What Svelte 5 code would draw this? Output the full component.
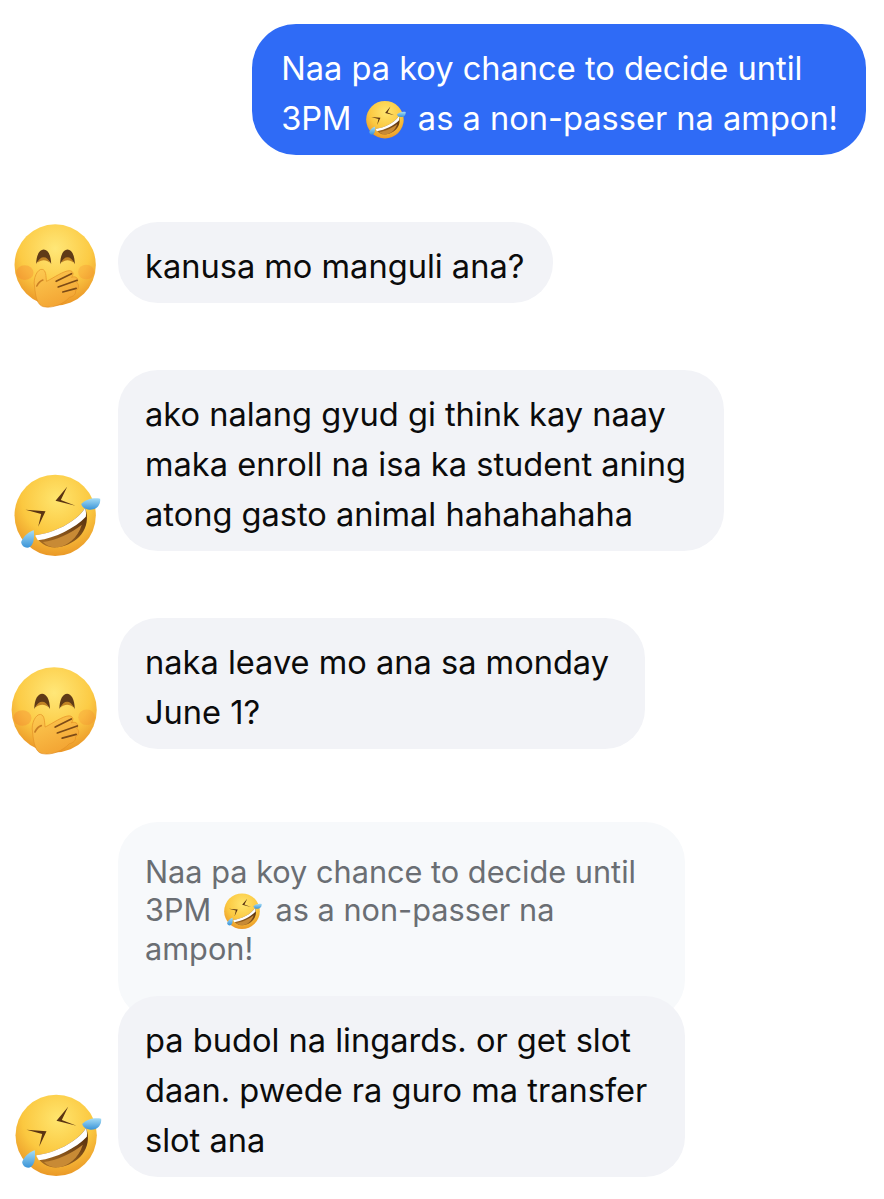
<script>
  const replyLines = ['pa budol na lingards. or get slot', 'daan. pwede ra guro ma transfer', 'slot ana'];
</script>

{#snippet hand(cls)}
  <svg class="emoji {cls}" viewBox="42 42 245 255" aria-hidden="true">
    <defs>
      <radialGradient id="faceA" cx="50%" cy="30%" r="72%">
        <stop offset="0" stop-color="#ffe778" />
        <stop offset="0.6" stop-color="#fccb45" />
        <stop offset="1" stop-color="#ea9325" />
      </radialGradient>
      <linearGradient id="handA" x1="0" y1="0" x2="0.5" y2="1">
        <stop offset="0" stop-color="#fdcb52" />
        <stop offset="1" stop-color="#f3a433" />
      </linearGradient>
    </defs>
    <circle cx="165" cy="165" r="122" fill="url(#faceA)" />
    <ellipse cx="74" cy="188" rx="26" ry="22" fill="#f1782f" opacity="0.3" />
    <ellipse cx="258" cy="186" rx="24" ry="22" fill="#f1782f" opacity="0.22" />
    <path d="M108 163C108 104 153 104 153 163C147 143 114 143 108 163Z" fill="#5f3a17" />
    <path d="M180 163C180 104 224 104 224 163C218 143 186 143 180 163Z" fill="#5f3a17" />
    <path d="M112 158C118 136 143 136 149 158C140 148 122 148 112 158Z" fill="#c08224" />
    <path d="M184 158C190 136 214 136 220 158C211 148 194 148 184 158Z" fill="#c08224" />
    <path d="M103 228C98 205 112 176 126 178C138 180 137 198 139 214C160 204 190 182 208 182C222 183 220 196 214 202C228 196 238 208 230 218C238 224 236 238 226 242C228 252 220 260 208 262C190 282 158 296 130 290C112 286 106 262 103 228Z" fill="url(#handA)" stroke="#e39026" stroke-width="2" />
    <path d="M168 214L214 191M174 231L231 211M188 246L228 235" stroke="#7d4b16" stroke-width="5" stroke-linecap="round" fill="none" />
    <path d="M110 228C116 216 122 212 128 210" stroke="#c97f24" stroke-width="5" stroke-linecap="round" fill="none" />
  </svg>
{/snippet}

{#snippet rofl(cls)}
  <svg class="emoji {cls}" viewBox="42 28 260 252" aria-hidden="true">
    <defs>
      <radialGradient id="faceB" cx="52%" cy="30%" r="72%">
        <stop offset="0" stop-color="#ffe56e" />
        <stop offset="0.6" stop-color="#fbc840" />
        <stop offset="1" stop-color="#e99525" />
      </radialGradient>
      <linearGradient id="mouthB" x1="0.7" y1="0" x2="0.3" y2="1">
        <stop offset="0" stop-color="#4f2a0c" />
        <stop offset="1" stop-color="#a66b22" />
      </linearGradient>
      <linearGradient id="tearB" x1="0" y1="0" x2="0" y2="1">
        <stop offset="0" stop-color="#a5dcf5" />
        <stop offset="1" stop-color="#3a94d8" />
      </linearGradient>
    </defs>
    <circle cx="165" cy="152" r="122" fill="url(#faceB)" />
    <path d="M105 212C160 205 225 175 255 130C276 190 232 240 172 248C140 251 118 236 105 212Z" fill="url(#mouthB)" />
    <path d="M128 232C165 228 215 205 245 180C232 222 200 244 172 248C155 250 140 244 128 232Z" fill="#c88a35" />
    <path d="M105 212C160 205 225 175 255 130C258 142 258 150 257 156C225 190 165 220 113 227C110 222 107 218 105 212Z" fill="#fff" />
    <path d="M201 66L166 108L226 123L182 106Z" fill="#5b3412" />
    <path d="M76 135L136 140L114 186L123 148Z" fill="#5b3412" />
    <path d="M243 118C256 104 280 98 300 102C302 122 288 136 268 135C254 134 246 128 243 118Z" fill="url(#tearB)" />
    <path d="M101 197C88 200 70 214 63 232C64 246 80 254 90 246C102 238 103 216 101 197Z" fill="url(#tearB)" />
  </svg>
{/snippet}

<main class="chat">
  <div class="outgoing">
    <p class="bubble mine">
      Naa pa koy chance to decide until<br />
      3PM {@render rofl('inline')} as a non-passer na ampon!
    </p>
  </div>

  <div class="row first">
    {@render hand('hand-a')}
    <p class="bubble">kanusa mo manguli ana?</p>
  </div>

  <div class="row">
    {@render rofl('rofl-a')}
    <p class="bubble wrapped">
      ako nalang gyud gi think kay naay<br />
      maka enroll na isa ka student aning<br />
      atong gasto animal hahahahaha
    </p>
  </div>

  <div class="row">
    {@render hand('hand-b')}
    <p class="bubble wrapped short">
      naka leave mo ana sa monday<br />
      June 1?
    </p>
  </div>

  <div class="row replied">
    {@render rofl('rofl-b')}
    <div class="group">
      <p class="quote">
        Naa pa koy chance to decide until<br />
        3PM {@render rofl('inline small')} as a non-passer na<br />
        ampon!
      </p>
      <p class="bubble reply">
        {#each replyLines as line, i}
          {#if i > 0}<br />{/if}{line}
        {/each}
      </p>
    </div>
  </div>
</main>

<style>
  :global(body) {
    background: #fff;
  }
  .chat {
    width: 884px;
    height: 1199px;
    overflow: hidden;
    padding-top: 24px;
    box-sizing: border-box;
    font-family: Inter, 'Liberation Sans', sans-serif;
    color: #0b0b0b;
  }
  p {
    margin: 0;
  }
  .outgoing {
    display: flex;
    justify-content: flex-end;
    padding-right: 18px;
  }
  .bubble {
    padding: 19px 29px 12px 27px;
    background: #f2f3f7;
    border-radius: 40px;
    font-size: 32.6px;
    line-height: 50px;
    white-space: nowrap;
  }
  .bubble.wrapped {
    padding-right: 38px;
  }
  .bubble.wrapped.short {
    padding-right: 36px;
  }
  .bubble.mine {
    padding-left: 29px;
    padding-right: 28px;
    background: #2f6bf6;
    color: #fff;
    border-radius: 44px;
  }
  .row {
    display: flex;
    align-items: flex-end;
    margin-top: 67px;
  }
  .row.replied {
    margin-top: 73px;
  }
  .emoji {
    flex: none;
  }
  /* each emoji in the source sits at its own size and offset from the bubble */
  .hand-a {
    width: 82px;
    height: 85px;
    margin: 0 22px -6px 14px;
  }
  .hand-b {
    width: 86px;
    height: 89px;
    margin: 0 21px -7px 11px;
  }
  .rofl-a {
    width: 87px;
    height: 84px;
    margin: 0 17px -7px 14px;
  }
  .rofl-b {
    width: 87px;
    height: 84px;
    margin: 0 16px -1px 15px;
  }
  .emoji.inline {
    width: 40px;
    height: 40px;
    margin: 0 3px 0 5px;
    vertical-align: -10px;
  }
  .emoji.small {
    width: 38px;
    height: 37px;
    margin: 0 5px 0 4px;
    vertical-align: -9px;
  }
  .group {
    width: 567px;
  }
  .quote {
    height: 198px;
    box-sizing: border-box;
    padding: 31px 28px 0 27px;
    background: #f7f9fb;
    border-radius: 40px;
    font-size: 30.7px;
    line-height: 38px;
    color: #6a6e73;
    white-space: nowrap;
  }
  .reply {
    margin-top: -24px;
    position: relative;
  }
</style>
